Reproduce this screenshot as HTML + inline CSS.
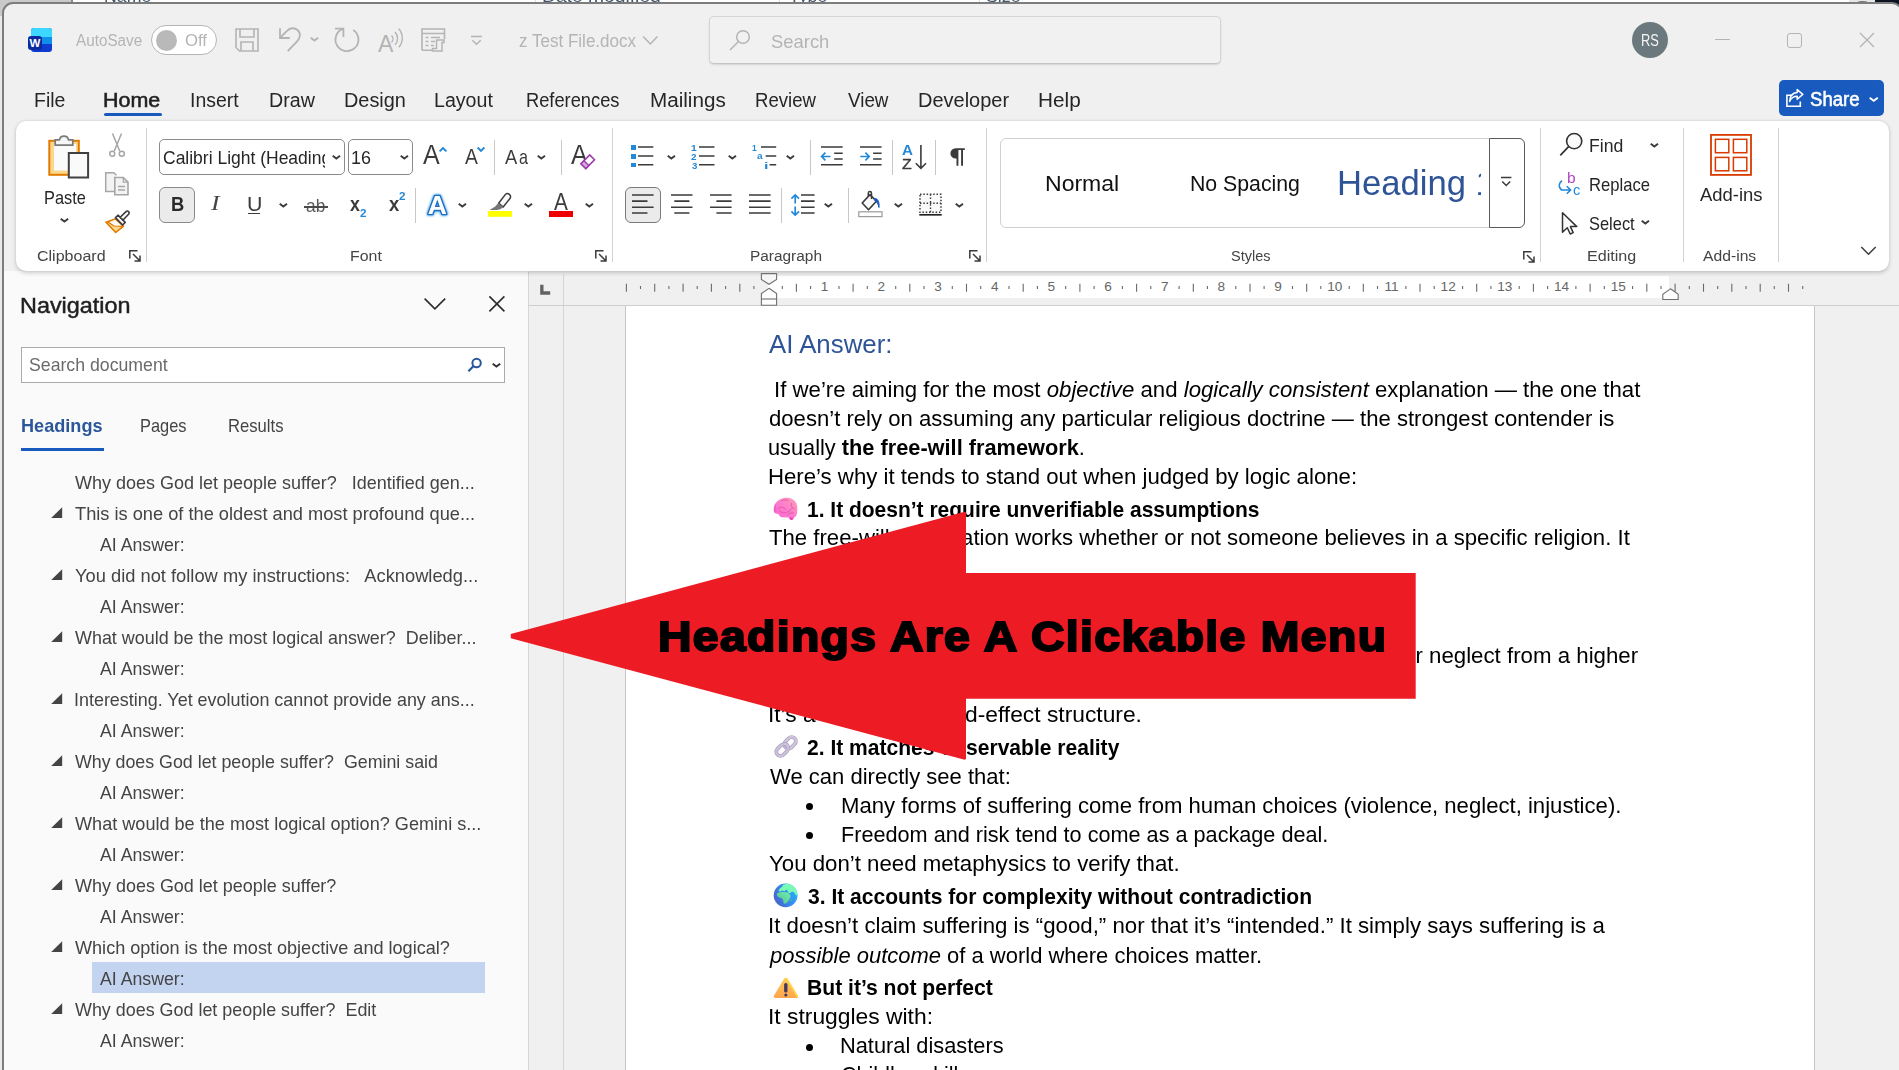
<!DOCTYPE html>
<html lang="en"><head><meta charset="utf-8"><title>z Test File.docx - Word</title>
<style>
html,body{margin:0;padding:0}
body{width:1899px;height:1070px;overflow:hidden;position:relative;background:#f0f0f0;font-family:"Liberation Sans",sans-serif;color:#222}
.a{position:absolute;display:block}
.t{position:absolute;white-space:pre;line-height:1;transform-origin:0 0}
svg{overflow:visible}
</style></head>
<body>
<div class="a" style="left:0px;top:0px;width:1899px;height:20px;background:#ffffff;"></div>
<div class="a" style="left:0px;top:0px;width:71px;height:16px;background:#c9c9c9;"></div>
<div class="a" style="left:0px;top:16px;width:6px;height:1054px;background:#e9e9e9;"></div>
<div class="a" style="left:1849px;top:0px;width:26px;height:3px;background:#e6e6e6;"></div>
<div class="a" style="left:1858px;top:1px;width:9px;height:1.5px;background:#777;border-radius:50% 50% 0 0;"></div>
<div class="a" style="left:1875px;top:0px;width:24px;height:8px;background:#0b1220;"></div>
<div class="a" style="left:0;top:0;width:1899px;height:3px;overflow:hidden">
<span class="t" style="left:103.5px;top:-12px;font-size:17px;color:#44546a;transform:scaleX(1.0417);">Name</span>
<span class="t" style="left:542.4px;top:-12px;font-size:17px;color:#44546a;transform:scaleX(1.1328);">Date modified</span>
<span class="t" style="left:788.6px;top:-12px;font-size:17px;color:#44546a;transform:scaleX(1.0358);">Type</span>
<span class="t" style="left:986.2px;top:-12px;font-size:17px;color:#44546a;transform:scaleX(1.0461);">Size</span>
</div>
<div class="a" style="left:71px;top:0px;width:1.5px;height:3px;background:#8a8a8a;"></div>
<div class="a" style="left:535px;top:0px;width:1px;height:3px;background:#ddd;"></div>
<div class="a" style="left:779px;top:0px;width:1px;height:3px;background:#ddd;"></div>
<div class="a" style="left:979px;top:0px;width:1px;height:3px;background:#ddd;"></div>
<div class="a" style="left:2px;top:2px;width:1901px;height:1100px;border:2px solid #7d7d7d;border-radius:11px;background:#f0f0f0;box-sizing:border-box"></div>
<div class="a" style="left:4px;top:271px;width:524px;height:799px;background:#fafafa;"></div>
<div class="a" style="left:528px;top:272px;width:1px;height:798px;background:#d6d6d6;"></div>
<div class="a" style="left:529px;top:271px;width:1370px;height:799px;background:#f0f0f0;"></div>
<div class="a" style="left:563px;top:274px;width:1px;height:796px;background:#d4d4d4;"></div>
<div class="a" style="left:529px;top:305px;width:1370px;height:1px;background:#cfcfcf;"></div>
<div class="a" style="left:625px;top:306px;width:1190px;height:764px;background:#ffffff;border-left:1px solid #c6c6c6;border-right:1px solid #c6c6c6;box-sizing:border-box"></div>
<div class="a" style="left:768px;top:276px;width:901px;height:22px;background:#ffffff;"></div>
<div class="a" style="left:16px;top:121px;width:1873px;height:150px;background:#fff;border-radius:10px;box-shadow:0 1.5px 4px rgba(0,0,0,.19),0 0 1.5px rgba(0,0,0,.09)"></div>
<svg class="a" style="left:27.6px;top:28px;" width="24" height="24" viewBox="0 0 24 24"><rect x="3" y="0" width="21" height="24" rx="3" fill="#0f3bd0"/>
<path d="M6 0h15a3 3 0 0 1 3 3v6H3V3a3 3 0 0 1 3-3z" fill="#3dd6ff"/>
<rect x="3" y="9" width="21" height="7" fill="#0f8eea"/>
<rect x="0" y="8" width="14" height="14" rx="3" fill="#0a2a9e"/>
<text x="7" y="19.3" font-family="Liberation Sans, sans-serif" font-weight="700" font-size="11.5" fill="#fff" text-anchor="middle">W</text></svg>
<span class="t" style="left:75.5px;top:33px;font-size:16px;color:#b4b4b4;transform:scaleX(0.9542);">AutoSave</span>
<div class="a" style="left:151px;top:25px;width:66px;height:30px;border:1px solid #b5b5b5;border-radius:15px;background:#fff;box-sizing:border-box"></div>
<div class="a" style="left:156px;top:29.5px;width:21px;height:21px;border-radius:50%;background:#b9b9b9"></div>
<span class="t" style="left:184.6px;top:33px;font-size:16px;color:#b4b4b4;transform:scaleX(1.0437);">Off</span>
<svg class="a" style="left:235px;top:28px;" width="24" height="24" viewBox="0 0 24 24"><path d="M1 1h22v22H4.5L1 19.5z M5 1v8h14V1 M6 23v-9h12v9" fill="none" stroke="#b4b4b4" stroke-width="1.6" stroke-linejoin="miter"/></svg>
<svg class="a" style="left:279px;top:27px;" width="23" height="26" viewBox="0 0 23 26"><path d="M1 1.2v9.8h9.7" fill="none" stroke="#b4b4b4" stroke-width="1.8"/><path d="M1.3 10.7 L8 3.8 C11 0.8 15.5 0.3 18.5 3 C22 6 21.5 11 18 14.5 L8.7 24.2" fill="none" stroke="#b4b4b4" stroke-width="1.8"/></svg>
<svg class="a" style="left:310.0px;top:37.1px;" width="8.9" height="4.9" viewBox="0 0 8.9 4.9"><path d="M0.7 0.7 L4.45 3.60 L8.20 0.7" fill="none" stroke="#b4b4b4" stroke-width="1.9"/></svg>
<svg class="a" style="left:334px;top:27px;" width="26" height="26" viewBox="0 0 26 26"><path d="M9.5 1.7 A11.5 11.5 0 1 0 19.2 3" fill="none" stroke="#b4b4b4" stroke-width="1.8"/><path d="M1 1.7h8.4v8.3" fill="none" stroke="#b4b4b4" stroke-width="1.8"/></svg>
<svg class="a" style="left:378px;top:27px;" width="26" height="26" viewBox="0 0 26 26"><text x="0" y="24.5" font-family="Liberation Sans, sans-serif" font-size="23" fill="#b4b4b4">A</text>
<path d="M13.5 8.5a5 5 0 0 1 0 7 M17 5a9.5 9.5 0 0 1 0 13 M20.8 1.8a14 14 0 0 1 0 18.5" fill="none" stroke="#b4b4b4" stroke-width="1.4"/></svg>
<svg class="a" style="left:421px;top:28px;" width="25" height="24" viewBox="0 0 25 24"><path d="M1 22.2V1h22.5v10 M1 5.5h22.5 M1 22.2h11" fill="none" stroke="#b4b4b4" stroke-width="1.6"/>
<path d="M4.5 9.5h3 M10 9.5h9 M4.5 13.5h3 M10 13.5h4 M4.5 17.5h3 M10 17.5h3" stroke="#b4b4b4" stroke-width="1.6"/>
<path d="M15.5 20.5v-8.5h7.5v2.5h-2v8.5h-9.5v-2.5z" fill="#f0f0f0" stroke="#b4b4b4" stroke-width="1.5"/></svg>
<svg class="a" style="left:470px;top:35px;" width="13" height="11" viewBox="0 0 13 11"><path d="M1 1.5h11" stroke="#b4b4b4" stroke-width="1.5"/><path d="M2.3 5.3 L6.5 9.3 L10.7 5.3" fill="none" stroke="#b4b4b4" stroke-width="1.5"/></svg>
<span class="t" style="left:519.3px;top:33px;font-size:17.5px;color:#b4b4b4;transform:scaleX(0.9733);">z Test File.docx</span>
<svg class="a" style="left:642px;top:35px;" width="17" height="11" viewBox="0 0 17 11"><path d="M1.2 1.5 L8.3 9 L15.4 1.5" fill="none" stroke="#b4b4b4" stroke-width="1.5"/></svg>
<div class="a" style="left:709px;top:16px;width:512px;height:48px;border:1px solid #d5d5d5;border-bottom-color:#c4c4c4;border-radius:5px;background:#f1f1f1;box-sizing:border-box;box-shadow:0 1px 2px rgba(0,0,0,.12)"></div>
<svg class="a" style="left:729px;top:29px;" width="22" height="22" viewBox="0 0 22 22"><circle cx="14" cy="8" r="6.3" fill="none" stroke="#b4b4b4" stroke-width="1.5"/><path d="M9.5 12.5 L1 21" stroke="#b4b4b4" stroke-width="1.5"/></svg>
<span class="t" style="left:770.9px;top:32px;font-size:19px;color:#b4b4b4;transform:scaleX(0.9689);">Search</span>
<div class="a" style="left:1632px;top:22px;width:36px;height:36px;border-radius:50%;background:#6b787d"></div>
<span class="t" style="left:1640.6px;top:33px;font-size:16px;color:#f4f4f4;transform:scaleX(0.8028);">RS</span>
<div class="a" style="left:1715px;top:39px;width:15px;height:1.3px;background:#b4b4b4;"></div>
<div class="a" style="left:1787px;top:33px;width:14.5px;height:14.5px;border:1.4px solid #b4b4b4;border-radius:3px;box-sizing:border-box"></div>
<svg class="a" style="left:1859px;top:32px;" width="16" height="16" viewBox="0 0 16 16"><path d="M1 1 L15 15 M15 1 L1 15" stroke="#b4b4b4" stroke-width="1.4"/></svg>
<span class="t" style="left:34.4px;top:90px;font-size:20px;color:#262626;transform:scaleX(0.9731);">File</span>
<span class="t" style="left:189.9px;top:90px;font-size:20px;color:#262626;transform:scaleX(0.9703);">Insert</span>
<span class="t" style="left:269.1px;top:90px;font-size:20px;color:#262626;transform:scaleX(0.9827);">Draw</span>
<span class="t" style="left:344.0px;top:90px;font-size:20px;color:#262626;transform:scaleX(0.9946);">Design</span>
<span class="t" style="left:434.3px;top:90px;font-size:20px;color:#262626;transform:scaleX(0.9800);">Layout</span>
<span class="t" style="left:526.3px;top:90px;font-size:20px;color:#262626;transform:scaleX(0.9138);">References</span>
<span class="t" style="left:650.0px;top:90px;font-size:20px;color:#262626;transform:scaleX(1.0324);">Mailings</span>
<span class="t" style="left:755.1px;top:90px;font-size:20px;color:#262626;transform:scaleX(0.9283);">Review</span>
<span class="t" style="left:847.5px;top:90px;font-size:20px;color:#262626;transform:scaleX(0.9406);">View</span>
<span class="t" style="left:918.0px;top:90px;font-size:20px;color:#262626;transform:scaleX(0.9990);">Developer</span>
<span class="t" style="left:1038.0px;top:90px;font-size:20px;color:#262626;transform:scaleX(1.0374);">Help</span>
<span class="t" style="left:102.9px;top:90px;font-size:20px;color:#1f1f1f;transform:scaleX(1.0724);-webkit-text-stroke:.55px #1f1f1f;">Home</span>
<div class="a" style="left:104px;top:112.5px;width:57.5px;height:3px;border-radius:1.5px;background:#185abd"></div>
<div class="a" style="left:1779px;top:80px;width:105px;height:36px;border-radius:5px;background:#185abd"></div>
<svg class="a" style="left:1785px;top:88px;" width="20" height="20" viewBox="0 0 20 20"><path d="M7.5 7.2H1.9V18.3H15.3V13.6" fill="none" stroke="#fff" stroke-width="1.6"/>
<path d="M12.2 1.6 L17.8 6.4 L12.2 11.2 V8.3 C8.6 8.3 6 10 4.6 13.4 C4.8 8.2 7.6 4.9 12.2 4.5z" fill="none" stroke="#fff" stroke-width="1.5" stroke-linejoin="round"/></svg>
<span class="t" style="left:1810.2px;top:90px;font-size:19.5px;color:#fff;transform:scaleX(0.9545);-webkit-text-stroke:.55px #fff;">Share</span>
<svg class="a" style="left:1868.7px;top:96.8px;" width="9.5" height="5.1" viewBox="0 0 9.5 5.1"><path d="M0.7 0.7 L4.75 3.80 L8.80 0.7" fill="none" stroke="#fff" stroke-width="1.9"/></svg>
<div class="a" style="left:145.8px;top:128px;width:1px;height:134px;background:#d1d1d1;"></div>
<div class="a" style="left:612.2px;top:128px;width:1px;height:134px;background:#d1d1d1;"></div>
<div class="a" style="left:986.0px;top:128px;width:1px;height:134px;background:#d1d1d1;"></div>
<div class="a" style="left:1539.9px;top:128px;width:1px;height:134px;background:#d1d1d1;"></div>
<div class="a" style="left:1683.0px;top:128px;width:1px;height:134px;background:#d1d1d1;"></div>
<div class="a" style="left:1778.0px;top:128px;width:1px;height:134px;background:#d1d1d1;"></div>
<div class="a" style="left:494.1px;top:139.5px;width:1px;height:35.3px;background:#c8c8c8;"></div>
<div class="a" style="left:561.0px;top:139.5px;width:1px;height:35.3px;background:#c8c8c8;"></div>
<div class="a" style="left:810.0px;top:139.5px;width:1px;height:35.3px;background:#c8c8c8;"></div>
<div class="a" style="left:891.9px;top:139.5px;width:1px;height:35.3px;background:#c8c8c8;"></div>
<div class="a" style="left:935.0px;top:139.5px;width:1px;height:35.3px;background:#c8c8c8;"></div>
<div class="a" style="left:415.0px;top:187.5px;width:1px;height:35.4px;background:#c8c8c8;"></div>
<div class="a" style="left:780.9px;top:187.5px;width:1px;height:35.4px;background:#c8c8c8;"></div>
<div class="a" style="left:848.0px;top:187.5px;width:1px;height:35.4px;background:#c8c8c8;"></div>
<svg class="a" style="left:47px;top:132px;" width="44" height="48" viewBox="0 0 44 48"><rect x="2.3" y="8.8" width="29.5" height="34" fill="#fbd78c" stroke="#e27a00" stroke-width="2"/>
<rect x="7" y="12" width="22" height="26.5" fill="#fafafa"/>
<path d="M8.2 13.2V7.8h4.2a4.7 4.7 0 0 1 9.2 0h4.2v5.4z" fill="#f6f6f6" stroke="#7a7a7a" stroke-width="1.7"/>
<rect x="21.8" y="21" width="19.3" height="24.5" fill="#fafafa" stroke="#404040" stroke-width="2"/></svg>
<span class="t" style="left:43.9px;top:189px;font-size:18.6px;color:#262626;transform:scaleX(0.8781);">Paste</span>
<svg class="a" style="left:60.0px;top:217.8px;" width="8.9" height="4.9" viewBox="0 0 8.9 4.9"><path d="M0.7 0.7 L4.45 3.60 L8.20 0.7" fill="none" stroke="#3b3b3b" stroke-width="1.9"/></svg>
<svg class="a" style="left:108px;top:132px;" width="18" height="26" viewBox="0 0 18 26"><path d="M4.5 1.5 L11.7 19 M13.5 1.5 L6.3 19" stroke="#a6a6a6" stroke-width="1.5" fill="none"/>
<circle cx="4.2" cy="21.8" r="2.5" fill="none" stroke="#a6a6a6" stroke-width="1.5"/><circle cx="13.8" cy="21.8" r="2.5" fill="none" stroke="#a6a6a6" stroke-width="1.5"/></svg>
<svg class="a" style="left:104px;top:171px;" width="26" height="26" viewBox="0 0 26 26"><path d="M10 20.5H1.7V1.7h8l2.8 2.6" fill="#f3f3f3" stroke="#a6a6a6" stroke-width="1.5"/>
<path d="M10.8 6.5h8.5l4.7 4.7v12.6H10.8z" fill="#f3f3f3" stroke="#a6a6a6" stroke-width="1.6"/>
<path d="M19.3 6.5v4.7h4.7" fill="none" stroke="#a6a6a6" stroke-width="1.3"/>
<path d="M14 15.5h7 M14 19h7" stroke="#a6a6a6" stroke-width="1.3"/></svg>
<svg class="a" style="left:104px;top:209px;" width="28" height="26" viewBox="0 0 28 26"><path d="M2 13.2 L11.2 10 L19.3 17.3 L11.7 23.5z" fill="#fbd78c" stroke="#e27a00" stroke-width="1.6" stroke-linejoin="round"/>
<path d="M11.2 10 L4 13 L10 17 L19.3 17.3z" fill="#fafafa" stroke="#e27a00" stroke-width="1.2" stroke-linejoin="round"/>
<path d="M11.5 8.6 L14.2 6.2 L21.2 13.4 L18.6 16z" fill="#fafafa" stroke="#3b3b3b" stroke-width="1.6" stroke-linejoin="round"/>
<path d="M16.2 8.3 L22 2.6 a1.8 1.8 0 0 1 2.6 0 a1.8 1.8 0 0 1 0 2.6 L19 11z" fill="#fafafa" stroke="#3b3b3b" stroke-width="1.6" stroke-linejoin="round"/></svg>
<span class="t" style="left:36.7px;top:248px;font-size:15.5px;color:#444;transform:scaleX(1.0331);">Clipboard</span>
<svg class="a" style="left:129.3px;top:250.3px;" width="12" height="12" viewBox="0 0 12 12"><path d="M0.8 8.5V0.8H8.5" fill="none" stroke="#3b3b3b" stroke-width="1.5"/><path d="M4 4 L10.8 10.8 M11 5.5 V11 H5.5" fill="none" stroke="#3b3b3b" stroke-width="1.5"/></svg>
<div class="a" style="left:159px;top:139px;width:186px;height:36px;background:#fff;border:1px solid #8a8a8a;border-radius:5px;box-sizing:border-box"></div>
<div class="a" style="left:160px;top:141px;width:165.4px;height:32px;overflow:hidden"><span class="t" style="left:2.8px;top:8px;font-size:18.6px;color:#262626;transform:scaleX(0.9405)">Calibri Light (Headings)</span></div>
<svg class="a" style="left:332.3px;top:155.4px;" width="8.7" height="4.8" viewBox="0 0 8.7 4.8"><path d="M0.7 0.7 L4.35 3.50 L8.00 0.7" fill="none" stroke="#3b3b3b" stroke-width="1.9"/></svg>
<div class="a" style="left:348px;top:139px;width:65px;height:36px;background:#fff;border:1px solid #8a8a8a;border-radius:5px;box-sizing:border-box"></div>
<span class="t" style="left:351.2px;top:149px;font-size:18.6px;color:#262626;transform:scaleX(0.9645);">16</span>
<svg class="a" style="left:400.0px;top:155.4px;" width="8.7" height="4.8" viewBox="0 0 8.7 4.8"><path d="M0.7 0.7 L4.35 3.50 L8.00 0.7" fill="none" stroke="#3b3b3b" stroke-width="1.9"/></svg>
<span class="t" style="left:423.3px;top:141px;font-size:27.5px;color:#3b3b3b;transform:scaleX(0.9103);">A</span>
<svg class="a" style="left:437.5px;top:145.5px;" width="10" height="7" viewBox="0 0 10 7"><path d="M1.6 5.4 L5 2 L8.4 5.4" fill="none" stroke="#2488d8" stroke-width="1.9"/></svg>
<span class="t" style="left:465.0px;top:147px;font-size:21.5px;color:#3b3b3b;transform:scaleX(0.8978);">A</span>
<svg class="a" style="left:476.3px;top:146px;" width="10" height="7" viewBox="0 0 10 7"><path d="M1.6 1.5 L5 4.9 L8.4 1.5" fill="none" stroke="#2488d8" stroke-width="1.9"/></svg>
<span class="t" style="left:504.5px;top:147px;font-size:20.3px;color:#3b3b3b;transform:scaleX(0.9063);">A</span>
<span class="t" style="left:519.1px;top:147px;font-size:20.3px;color:#3b3b3b;transform:scaleX(0.7959);">a</span>
<svg class="a" style="left:537.1px;top:155.4px;" width="8.7" height="4.8" viewBox="0 0 8.7 4.8"><path d="M0.7 0.7 L4.35 3.50 L8.00 0.7" fill="none" stroke="#3b3b3b" stroke-width="1.9"/></svg>
<span class="t" style="left:570.9px;top:141px;font-size:27.5px;color:#3b3b3b;transform:scaleX(0.9103);">A</span>
<svg class="a" style="left:579px;top:153px;" width="18" height="17" viewBox="0 0 18 17"><path d="M2 10.7 L10.7 2 L15.5 6.8 L6.8 15.5z" fill="#fff" stroke="#9b3aa9" stroke-width="1.6"/><path d="M2 10.7 L5 7.7 L9.8 12.5 L6.8 15.5z" fill="#d9a7e0" stroke="#9b3aa9" stroke-width="1.3"/></svg>
<div class="a" style="left:159px;top:187px;width:36px;height:36px;background:#ebebeb;border:1px solid #8a8a8a;border-radius:6px;box-sizing:border-box"></div>
<span class="t" style="left:170.6px;top:194px;font-size:20px;font-weight:700;color:#2a2a2a;transform:scaleX(0.9182);">B</span>
<span class="t" style="left:210.8px;top:193px;font-size:21.5px;font-family:'Liberation Serif',serif;font-style:italic;color:#444;transform:scaleX(1.2)">I</span>
<span class="t" style="left:246.5px;top:195px;font-size:19.5px;color:#3b3b3b;transform:scaleX(1.0927);">U</span>
<div class="a" style="left:247.7px;top:212.8px;width:12.8px;height:1.4px;background:#3b3b3b;"></div>
<svg class="a" style="left:278.9px;top:203.2px;" width="8.7" height="4.8" viewBox="0 0 8.7 4.8"><path d="M0.7 0.7 L4.35 3.50 L8.00 0.7" fill="none" stroke="#3b3b3b" stroke-width="1.9"/></svg>
<span class="t" style="left:305.7px;top:196px;font-size:19px;color:#5a5a5a;transform:scaleX(0.9114);">ab</span>
<div class="a" style="left:304.3px;top:206.4px;width:23.4px;height:1.3px;background:#4a4a4a;"></div>
<span class="t" style="left:350.2px;top:194px;font-size:20px;font-weight:700;color:#3b3b3b;transform:scaleX(0.8856);">x</span>
<span class="t" style="left:360.3px;top:208px;font-size:11px;font-weight:700;color:#2488d8;transform:scaleX(1.0574);">2</span>
<span class="t" style="left:388.6px;top:194px;font-size:20px;font-weight:700;color:#3b3b3b;transform:scaleX(0.9225);">x</span>
<span class="t" style="left:399.4px;top:191px;font-size:11px;font-weight:700;color:#2488d8;transform:scaleX(1.0574);">2</span>
<svg class="a" style="left:424px;top:191px;filter:drop-shadow(0 0 1.2px #5fb0f2) drop-shadow(0 0 0.8px #7cc0f5);" width="27" height="27" viewBox="0 0 27 27"><text x="13.4" y="22.9" text-anchor="middle" font-family="Liberation Sans, sans-serif" font-weight="700" font-size="26.5" fill="#fff" stroke="#1b6ec2" stroke-width="2.7" stroke-linejoin="round" paint-order="stroke">A</text></svg>
<svg class="a" style="left:458.0px;top:203.2px;" width="8.7" height="4.8" viewBox="0 0 8.7 4.8"><path d="M0.7 0.7 L4.35 3.50 L8.00 0.7" fill="none" stroke="#3b3b3b" stroke-width="1.9"/></svg>
<svg class="a" style="left:487px;top:191px;" width="26" height="27" viewBox="0 0 26 27"><rect x="1" y="20" width="24" height="5.8" fill="#ffff00"/>
<path d="M11.6 12.2 L18.3 3.6 a2.6 2.6 0 0 1 3.7 -0.4 l0.6 0.5 a2.6 2.6 0 0 1 0.4 3.7 L16.2 16z" fill="#fafafa" stroke="#3b3b3b" stroke-width="1.5" stroke-linejoin="round"/>
<path d="M11.3 12 L16.5 16.2 L13.2 18.3 L10.2 19 H2.5 L8.2 15.6z" fill="#767676"/></svg>
<svg class="a" style="left:523.8px;top:203.2px;" width="8.7" height="4.8" viewBox="0 0 8.7 4.8"><path d="M0.7 0.7 L4.35 3.50 L8.00 0.7" fill="none" stroke="#3b3b3b" stroke-width="1.9"/></svg>
<span class="t" style="left:554.3px;top:191px;font-size:23px;color:#3b3b3b;transform:scaleX(0.9048);">A</span>
<div class="a" style="left:549px;top:211px;width:24px;height:5.8px;background:#ee0000;"></div>
<svg class="a" style="left:584.6px;top:203.2px;" width="8.7" height="4.8" viewBox="0 0 8.7 4.8"><path d="M0.7 0.7 L4.35 3.50 L8.00 0.7" fill="none" stroke="#3b3b3b" stroke-width="1.9"/></svg>
<span class="t" style="left:350.2px;top:248px;font-size:15.5px;color:#444;transform:scaleX(1.0260);">Font</span>
<svg class="a" style="left:595.2px;top:250.3px;" width="12" height="12" viewBox="0 0 12 12"><path d="M0.8 8.5V0.8H8.5" fill="none" stroke="#3b3b3b" stroke-width="1.5"/><path d="M4 4 L10.8 10.8 M11 5.5 V11 H5.5" fill="none" stroke="#3b3b3b" stroke-width="1.5"/></svg>
<div class="a" style="left:631px;top:144.9px;width:4.8px;height:4.8px;background:#2488d8;"></div>
<div class="a" style="left:631px;top:153.9px;width:4.8px;height:4.8px;background:#2488d8;"></div>
<div class="a" style="left:631px;top:162.7px;width:4.8px;height:4.8px;background:#2488d8;"></div>
<svg class="a" style="left:637.4px;top:145.3px;" width="18.3" height="22.8" viewBox="0 0 18.3 22.8"><path d="M1.0 2.0H16.3 M1.0 11.0H16.3 M1.0 19.8H16.3" stroke="#3b3b3b" stroke-width="1.6" fill="none"/></svg>
<svg class="a" style="left:666.9px;top:155.4px;" width="8.7" height="4.8" viewBox="0 0 8.7 4.8"><path d="M0.7 0.7 L4.35 3.50 L8.00 0.7" fill="none" stroke="#3b3b3b" stroke-width="1.9"/></svg>
<span class="t" style="left:691.1px;top:144px;font-size:9.2px;font-weight:700;color:#2488d8;transform:scaleX(1.1212);">1</span>
<span class="t" style="left:691.4px;top:153px;font-size:9.2px;font-weight:700;color:#2488d8;transform:scaleX(1.0836);">2</span>
<span class="t" style="left:691.5px;top:162px;font-size:9.2px;font-weight:700;color:#2488d8;transform:scaleX(1.0496);">3</span>
<svg class="a" style="left:698.4px;top:145.3px;" width="18.5" height="22.8" viewBox="0 0 18.5 22.8"><path d="M1.0 2.0H16.5 M1.0 11.0H16.5 M1.0 19.8H16.5" stroke="#3b3b3b" stroke-width="1.6" fill="none"/></svg>
<svg class="a" style="left:727.9px;top:155.4px;" width="8.7" height="4.8" viewBox="0 0 8.7 4.8"><path d="M0.7 0.7 L4.35 3.50 L8.00 0.7" fill="none" stroke="#3b3b3b" stroke-width="1.9"/></svg>
<span class="t" style="left:752.3px;top:144px;font-size:9.2px;font-weight:700;color:#2488d8;transform:scaleX(0.9110);">1</span>
<span class="t" style="left:756.6px;top:151px;font-size:9.6px;font-weight:700;color:#2488d8;transform:scaleX(1.0549);">a</span>
<span class="t" style="left:763.7px;top:161px;font-size:9.6px;font-weight:700;color:#2488d8;transform:scaleX(1.6705);">i</span>
<svg class="a" style="left:759.7px;top:145.3px;" width="18.2" height="22.8" viewBox="0 0 18.2 22.8"><path d="M1.0 2.0H16.2 M5.7 11.0H16.2 M9.6 19.8H16.2" stroke="#3b3b3b" stroke-width="1.6" fill="none"/></svg>
<svg class="a" style="left:785.9px;top:155.4px;" width="8.7" height="4.8" viewBox="0 0 8.7 4.8"><path d="M0.7 0.7 L4.35 3.50 L8.00 0.7" fill="none" stroke="#3b3b3b" stroke-width="1.9"/></svg>
<svg class="a" style="left:820.1px;top:145.3px;" width="24.7" height="22.8" viewBox="0 0 24.7 22.8"><path d="M1.0 2.0H22.7 M14.2 8.2H22.7 M14.2 14.0H22.7 M1.0 19.8H22.7" stroke="#3b3b3b" stroke-width="1.6" fill="none"/></svg>
<svg class="a" style="left:820px;top:151px;" width="12" height="11" viewBox="0 0 12 11"><path d="M1.6 5.5 H10.5 M5.4 1.7 L1.6 5.5 L5.4 9.3" fill="none" stroke="#2488d8" stroke-width="1.7"/></svg>
<svg class="a" style="left:859.3px;top:145.3px;" width="24.6" height="22.8" viewBox="0 0 24.6 22.8"><path d="M1.0 2.0H22.6 M14.1 8.2H22.6 M14.1 14.0H22.6 M1.0 19.8H22.6" stroke="#3b3b3b" stroke-width="1.6" fill="none"/></svg>
<svg class="a" style="left:859px;top:151px;" width="12" height="11" viewBox="0 0 12 11"><path d="M1.3 5.5 H10.2 M6.4 1.7 L10.2 5.5 L6.4 9.3" fill="none" stroke="#2488d8" stroke-width="1.7"/></svg>
<span class="t" style="left:901.7px;top:143px;font-size:14.4px;font-weight:700;color:#2488d8;transform:scaleX(1.0558);-webkit-text-stroke:0;">A</span>
<span class="t" style="left:901.8px;top:157px;font-size:14.4px;color:#3b3b3b;transform:scaleX(1.1028);-webkit-text-stroke:.4px #3b3b3b;">Z</span>
<svg class="a" style="left:914px;top:144px;" width="14" height="26" viewBox="0 0 14 26"><path d="M6.9 1 V24.2 M1.8 19.2 L6.9 24.4 L12 19.2" fill="none" stroke="#3b3b3b" stroke-width="1.6"/></svg>
<svg class="a" style="left:948px;top:147px;" width="18" height="20" viewBox="0 0 18 20"><path d="M7.6 1.2 H16.8 V3 H15 V18.8 H13.1 V3 H10.4 V18.8 H8.5 V11.6 H7.6 a5.2 5.2 0 0 1 0 -10.4z" fill="#3b3b3b"/></svg>
<div class="a" style="left:625px;top:187px;width:36px;height:36px;background:#ebebeb;border:1px solid #7a7a7a;border-radius:6px;box-sizing:border-box"></div>
<svg class="a" style="left:631.1px;top:193.2px;" width="24.6" height="23.0" viewBox="0 0 24.6 23.0"><path d="M1.0 2.0H22.6 M1.0 8.1H16.5 M1.0 14.2H22.6 M1.0 20.0H16.5" stroke="#3b3b3b" stroke-width="1.6" fill="none"/></svg>
<svg class="a" style="left:670.2px;top:193.2px;" width="24.5" height="23.0" viewBox="0 0 24.5 23.0"><path d="M1.0 2.0H22.5 M4.3 8.1H19.4 M1.0 14.2H22.5 M4.3 20.0H19.4" stroke="#3b3b3b" stroke-width="1.6" fill="none"/></svg>
<svg class="a" style="left:709.1px;top:193.2px;" width="24.6" height="23.0" viewBox="0 0 24.6 23.0"><path d="M1.0 2.0H22.6 M7.4 8.1H22.6 M1.0 14.2H22.6 M7.4 20.0H22.6" stroke="#3b3b3b" stroke-width="1.6" fill="none"/></svg>
<svg class="a" style="left:748.1px;top:193.2px;" width="24.6" height="23.0" viewBox="0 0 24.6 23.0"><path d="M1.0 2.0H22.6 M1.0 8.1H22.6 M1.0 14.2H22.6 M1.0 20.0H22.6" stroke="#3b3b3b" stroke-width="1.6" fill="none"/></svg>
<svg class="a" style="left:789.5px;top:193px;" width="11" height="24" viewBox="0 0 11 24"><path d="M5.2 1.9 V10.5 M1.4 5.7 L5.2 1.9 L9 5.7 M5.2 13.5 V22.1 M1.4 18.3 L5.2 22.1 L9 18.3" fill="none" stroke="#2488d8" stroke-width="1.7"/></svg>
<svg class="a" style="left:800.3px;top:193.2px;" width="16.6" height="23.0" viewBox="0 0 16.6 23.0"><path d="M1.0 2.0H14.6 M1.0 8.1H14.6 M1.0 14.2H14.6 M1.0 20.0H14.6" stroke="#3b3b3b" stroke-width="1.6" fill="none"/></svg>
<svg class="a" style="left:823.7px;top:203.2px;" width="8.7" height="4.8" viewBox="0 0 8.7 4.8"><path d="M0.7 0.7 L4.35 3.50 L8.00 0.7" fill="none" stroke="#3b3b3b" stroke-width="1.9"/></svg>
<svg class="a" style="left:857px;top:190px;" width="27" height="28" viewBox="0 0 27 28"><rect x="1.8" y="21.8" width="23.2" height="4.8" fill="#fff" stroke="#9a9a9a" stroke-width="1.2"/>
<path d="M5.2 13 L13 4.6 L19.4 11.2 L11.5 19.7z" fill="#fafafa" stroke="#3b3b3b" stroke-width="1.6" stroke-linejoin="round"/>
<path d="M11.3 6.5 V3.2 a1.6 1.6 0 0 1 3.2 0 V9" fill="none" stroke="#3b3b3b" stroke-width="1.5"/>
<path d="M17.3 8.6 C20.5 8 22.6 11.5 22 17.5 C21.2 14 20 11.6 17.8 10.6z" fill="#185abd" stroke="#185abd" stroke-width="1"/></svg>
<svg class="a" style="left:893.9px;top:203.2px;" width="8.7" height="4.8" viewBox="0 0 8.7 4.8"><path d="M0.7 0.7 L4.35 3.50 L8.00 0.7" fill="none" stroke="#3b3b3b" stroke-width="1.9"/></svg>
<svg class="a" style="left:918px;top:192px;" width="25" height="25" viewBox="0 0 25 25"><rect x="2" y="2.3" width="21" height="18" fill="#fafafa" stroke="#3b3b3b" stroke-width="1.5" stroke-dasharray="1.5 1.8"/>
<path d="M12.5 2.3 V20.3 M2 11.3 H23" stroke="#3b3b3b" stroke-width="1.4" stroke-dasharray="1.5 1.8"/>
<path d="M1.3 22.8 H23.7" stroke="#222" stroke-width="1.7"/></svg>
<svg class="a" style="left:954.7px;top:203.2px;" width="8.7" height="4.8" viewBox="0 0 8.7 4.8"><path d="M0.7 0.7 L4.35 3.50 L8.00 0.7" fill="none" stroke="#3b3b3b" stroke-width="1.9"/></svg>
<span class="t" style="left:750.4px;top:248px;font-size:15.5px;color:#444;transform:scaleX(0.9942);">Paragraph</span>
<svg class="a" style="left:969.3px;top:250.3px;" width="12" height="12" viewBox="0 0 12 12"><path d="M0.8 8.5V0.8H8.5" fill="none" stroke="#3b3b3b" stroke-width="1.5"/><path d="M4 4 L10.8 10.8 M11 5.5 V11 H5.5" fill="none" stroke="#3b3b3b" stroke-width="1.5"/></svg>
<div class="a" style="left:1000px;top:138px;width:525px;height:90px;border:1px solid #d0d0d0;border-radius:6px;background:#fff;box-sizing:border-box"></div>
<div class="a" style="left:1489px;top:138px;width:36px;height:90px;border:1px solid #5a5a5a;border-radius:0 6px 6px 0;background:#fff;box-sizing:border-box"></div>
<span class="t" style="left:1045.0px;top:173px;font-size:22.5px;color:#111;transform:scaleX(1.0237);">Normal</span>
<span class="t" style="left:1190.3px;top:173px;font-size:22.5px;color:#111;transform:scaleX(0.9449);">No Spacing</span>
<div class="a" style="left:1330px;top:160px;width:150.6px;height:50px;overflow:hidden"><span class="t" style="left:6.5px;top:6px;font-size:34.5px;color:#2f5496;transform:scaleX(1.0030)">Heading 1</span></div>
<svg class="a" style="left:1500px;top:175px;" width="13" height="13" viewBox="0 0 13 13"><path d="M1 2.5 H11.4" stroke="#3b3b3b" stroke-width="1.5"/><path d="M2.2 6.5 L6.2 10.5 L10.2 6.5" fill="none" stroke="#3b3b3b" stroke-width="1.5"/></svg>
<span class="t" style="left:1231.1px;top:248px;font-size:15.5px;color:#444;transform:scaleX(0.9378);">Styles</span>
<svg class="a" style="left:1523.2px;top:250.6px;" width="12" height="12" viewBox="0 0 12 12"><path d="M0.8 8.5V0.8H8.5" fill="none" stroke="#3b3b3b" stroke-width="1.5"/><path d="M4 4 L10.8 10.8 M11 5.5 V11 H5.5" fill="none" stroke="#3b3b3b" stroke-width="1.5"/></svg>
<svg class="a" style="left:1559px;top:132px;" width="26" height="26" viewBox="0 0 26 26"><circle cx="15.2" cy="9.1" r="7.6" fill="#fafafa" stroke="#333" stroke-width="1.6"/><path d="M9.6 14.6 L1.3 23.4" stroke="#333" stroke-width="1.7"/></svg>
<span class="t" style="left:1588.7px;top:137px;font-size:18.6px;color:#262626;transform:scaleX(0.9474);">Find</span>
<svg class="a" style="left:1650.1px;top:143.1px;" width="8.7" height="4.8" viewBox="0 0 8.7 4.8"><path d="M0.7 0.7 L4.35 3.50 L8.00 0.7" fill="none" stroke="#3b3b3b" stroke-width="1.9"/></svg>
<span class="t" style="left:1567.1px;top:170px;font-size:15px;color:#b146c2;transform:scaleX(1.0377);">b</span>
<span class="t" style="left:1573.1px;top:182px;font-size:15px;color:#2488d8;transform:scaleX(0.9741);">c</span>
<svg class="a" style="left:1557px;top:179px;" width="16" height="17" viewBox="0 0 16 17"><path d="M5 1.8 C1.5 4 1.2 8.5 4.5 11 H13.5 M9.8 7.2 L13.6 11 L9.8 14.8" fill="none" stroke="#2488d8" stroke-width="1.6"/></svg>
<span class="t" style="left:1588.7px;top:176px;font-size:18.6px;color:#262626;transform:scaleX(0.8939);">Replace</span>
<svg class="a" style="left:1560px;top:211px;" width="20" height="25" viewBox="0 0 20 25"><path d="M2.5 1.8 V21.2 L7.3 16.8 L10.2 23 L13.2 21.6 L10.4 15.6 H16.8z" fill="#fafafa" stroke="#333" stroke-width="1.5" stroke-linejoin="round"/></svg>
<span class="t" style="left:1589.2px;top:215px;font-size:18.6px;color:#262626;transform:scaleX(0.8834);">Select</span>
<svg class="a" style="left:1641.3px;top:220.2px;" width="8.7" height="4.8" viewBox="0 0 8.7 4.8"><path d="M0.7 0.7 L4.35 3.50 L8.00 0.7" fill="none" stroke="#3b3b3b" stroke-width="1.9"/></svg>
<span class="t" style="left:1586.5px;top:248px;font-size:15.5px;color:#444;transform:scaleX(1.0393);">Editing</span>
<svg class="a" style="left:1709px;top:133px;" width="44" height="44" viewBox="0 0 44 44"><rect x="2" y="1.9" width="40" height="40" fill="#fff" stroke="#d83b01" stroke-width="1.8"/>
<rect x="6.4" y="6.3" width="13.4" height="13.4" fill="none" stroke="#d83b01" stroke-width="1.5"/><rect x="24.4" y="6.3" width="13.4" height="13.4" fill="none" stroke="#d83b01" stroke-width="1.5"/>
<rect x="6.4" y="24.4" width="13.4" height="13.4" fill="none" stroke="#d83b01" stroke-width="1.5"/><rect x="24.4" y="24.4" width="13.4" height="13.4" fill="none" stroke="#d83b01" stroke-width="1.5"/></svg>
<span class="t" style="left:1700.4px;top:186px;font-size:18.6px;color:#262626;transform:scaleX(0.9926);">Add-ins</span>
<span class="t" style="left:1703.4px;top:248px;font-size:15.5px;color:#444;transform:scaleX(1.0122);">Add-ins</span>
<svg class="a" style="left:1860px;top:246px;" width="17" height="10" viewBox="0 0 17 10"><path d="M1.3 1 L8.5 8.3 L15.7 1" fill="none" stroke="#3b3b3b" stroke-width="1.5"/></svg>
<span class="t" style="left:20.4px;top:295px;font-size:21.8px;color:#1f1f1f;transform:scaleX(1.0731);-webkit-text-stroke:.45px #1f1f1f;">Navigation</span>
<svg class="a" style="left:423px;top:297px;" width="24" height="14" viewBox="0 0 24 14"><path d="M1.6 1.6 L11.9 11.9 L22.2 1.6" fill="none" stroke="#2b2b2b" stroke-width="1.6"/></svg>
<svg class="a" style="left:488px;top:295px;" width="18" height="18" viewBox="0 0 18 18"><path d="M1.4 1.4 L16.4 16.4 M16.4 1.4 L1.4 16.4" stroke="#2b2b2b" stroke-width="1.6"/></svg>
<div class="a" style="left:21px;top:347px;width:484px;height:36px;border:1px solid #ababab;background:#fff;box-sizing:border-box"></div>
<span class="t" style="left:29.3px;top:356px;font-size:18.6px;color:#6a6a6a;transform:scaleX(0.9516);">Search document</span>
<svg class="a" style="left:467px;top:357px;" width="16" height="16" viewBox="0 0 16 16"><circle cx="9.6" cy="6" r="4.2" fill="none" stroke="#2b579a" stroke-width="2"/><path d="M6.6 9 L1.4 14.2" stroke="#2b579a" stroke-width="2.2"/></svg>
<svg class="a" style="left:491.9px;top:362.8px;" width="8.9" height="4.9" viewBox="0 0 8.9 4.9"><path d="M0.7 0.7 L4.45 3.60 L8.20 0.7" fill="none" stroke="#333" stroke-width="1.9"/></svg>
<span class="t" style="left:21.1px;top:417px;font-size:18.6px;font-weight:700;color:#2b579a;transform:scaleX(0.9741);">Headings</span>
<div class="a" style="left:21px;top:448px;width:83px;height:3px;background:#185abd;"></div>
<span class="t" style="left:140.4px;top:417px;font-size:18.6px;color:#444;transform:scaleX(0.8824);">Pages</span>
<span class="t" style="left:228.3px;top:417px;font-size:18.6px;color:#444;transform:scaleX(0.8943);">Results</span>
<div class="a" style="left:92px;top:962px;width:393px;height:31px;background:#c3d4f1;"></div>
<span class="t" style="left:75.2px;top:474px;font-size:18.6px;color:#444;transform:scaleX(0.9677);">Why does God let people suffer?   Identified gen...</span>
<span class="t" style="left:74.9px;top:505px;font-size:18.6px;color:#444;transform:scaleX(0.9800);">This is one of the oldest and most profound que...</span>
<svg class="a" style="left:51px;top:506.7px;" width="12" height="12" viewBox="0 0 12 12"><path d="M0.2 11 H11.2 V0.2z" fill="#444"/></svg>
<span class="t" style="left:99.6px;top:536px;font-size:18.6px;color:#444;transform:scaleX(0.9521);">AI Answer:</span>
<span class="t" style="left:74.9px;top:567px;font-size:18.6px;color:#444;transform:scaleX(0.9844);">You did not follow my instructions:   Acknowledg...</span>
<svg class="a" style="left:51px;top:568.7px;" width="12" height="12" viewBox="0 0 12 12"><path d="M0.2 11 H11.2 V0.2z" fill="#444"/></svg>
<span class="t" style="left:99.6px;top:598px;font-size:18.6px;color:#444;transform:scaleX(0.9521);">AI Answer:</span>
<span class="t" style="left:75.2px;top:629px;font-size:18.6px;color:#444;transform:scaleX(0.9639);">What would be the most logical answer?  Deliber...</span>
<svg class="a" style="left:51px;top:630.7px;" width="12" height="12" viewBox="0 0 12 12"><path d="M0.2 11 H11.2 V0.2z" fill="#444"/></svg>
<span class="t" style="left:99.6px;top:660px;font-size:18.6px;color:#444;transform:scaleX(0.9521);">AI Answer:</span>
<span class="t" style="left:73.6px;top:691px;font-size:18.6px;color:#444;transform:scaleX(0.9642);">Interesting. Yet evolution cannot provide any ans...</span>
<svg class="a" style="left:51px;top:692.7px;" width="12" height="12" viewBox="0 0 12 12"><path d="M0.2 11 H11.2 V0.2z" fill="#444"/></svg>
<span class="t" style="left:99.6px;top:722px;font-size:18.6px;color:#444;transform:scaleX(0.9521);">AI Answer:</span>
<span class="t" style="left:75.2px;top:753px;font-size:18.6px;color:#444;transform:scaleX(0.9576);">Why does God let people suffer?  Gemini said</span>
<svg class="a" style="left:51px;top:754.7px;" width="12" height="12" viewBox="0 0 12 12"><path d="M0.2 11 H11.2 V0.2z" fill="#444"/></svg>
<span class="t" style="left:99.6px;top:784px;font-size:18.6px;color:#444;transform:scaleX(0.9521);">AI Answer:</span>
<span class="t" style="left:75.2px;top:815px;font-size:18.6px;color:#444;transform:scaleX(0.9731);">What would be the most logical option? Gemini s...</span>
<svg class="a" style="left:51px;top:816.7px;" width="12" height="12" viewBox="0 0 12 12"><path d="M0.2 11 H11.2 V0.2z" fill="#444"/></svg>
<span class="t" style="left:99.6px;top:846px;font-size:18.6px;color:#444;transform:scaleX(0.9521);">AI Answer:</span>
<span class="t" style="left:75.2px;top:877px;font-size:18.6px;color:#444;transform:scaleX(0.9663);">Why does God let people suffer?</span>
<svg class="a" style="left:51px;top:878.7px;" width="12" height="12" viewBox="0 0 12 12"><path d="M0.2 11 H11.2 V0.2z" fill="#444"/></svg>
<span class="t" style="left:99.6px;top:908px;font-size:18.6px;color:#444;transform:scaleX(0.9521);">AI Answer:</span>
<span class="t" style="left:75.2px;top:939px;font-size:18.6px;color:#444;transform:scaleX(0.9723);">Which option is the most objective and logical?</span>
<svg class="a" style="left:51px;top:940.7px;" width="12" height="12" viewBox="0 0 12 12"><path d="M0.2 11 H11.2 V0.2z" fill="#444"/></svg>
<span class="t" style="left:99.6px;top:970px;font-size:18.6px;color:#444;transform:scaleX(0.9521);">AI Answer:</span>
<span class="t" style="left:75.2px;top:1001px;font-size:18.6px;color:#444;transform:scaleX(0.9631);">Why does God let people suffer?  Edit</span>
<svg class="a" style="left:51px;top:1002.7px;" width="12" height="12" viewBox="0 0 12 12"><path d="M0.2 11 H11.2 V0.2z" fill="#444"/></svg>
<span class="t" style="left:99.6px;top:1032px;font-size:18.6px;color:#444;transform:scaleX(0.9521);">AI Answer:</span>
<svg class="a" style="left:560px;top:275px;" width="1260" height="24" viewBox="0 0 1260 24"><path d="M66.4 8.7V16.7 M80.5 11V14 M94.7 8.7V16.7 M108.9 11V14 M123.1 8.7V16.7 M137.2 11V14 M151.4 8.7V16.7 M165.6 11V14 M179.8 8.7V16.7 M193.9 11V14 M222.3 11V14 M236.4 8.7V16.7 M250.6 11V14 M279.0 11V14 M293.1 8.7V16.7 M307.3 11V14 M335.7 11V14 M349.8 8.7V16.7 M364.0 11V14 M392.3 11V14 M406.5 8.7V16.7 M420.7 11V14 M449.0 11V14 M463.2 8.7V16.7 M477.4 11V14 M505.7 11V14 M519.9 8.7V16.7 M534.1 11V14 M562.4 11V14 M576.6 8.7V16.7 M590.8 11V14 M619.1 11V14 M633.3 8.7V16.7 M647.4 11V14 M675.8 11V14 M690.0 8.7V16.7 M704.1 11V14 M732.5 11V14 M746.7 8.7V16.7 M760.8 11V14 M789.2 11V14 M803.3 8.7V16.7 M817.5 11V14 M845.9 11V14 M860.0 8.7V16.7 M874.2 11V14 M902.6 11V14 M916.7 8.7V16.7 M930.9 11V14 M959.2 11V14 M973.4 8.7V16.7 M987.6 11V14 M1015.9 11V14 M1030.1 8.7V16.7 M1044.3 11V14 M1072.6 11V14 M1086.8 8.7V16.7 M1101.0 11V14 M1115.1 8.7V16.7 M1129.3 11V14 M1143.5 8.7V16.7 M1157.7 11V14 M1171.8 8.7V16.7 M1186.0 11V14 M1200.2 8.7V16.7 M1214.3 11V14 M1228.5 8.7V16.7 M1242.7 11V14" stroke="#6a6a6a" stroke-width="1.1" fill="none"/></svg>
<span class="t" style="left:820.8px;top:280px;font-size:13.6px;color:#666;">1</span>
<span class="t" style="left:877.5px;top:280px;font-size:13.6px;color:#666;">2</span>
<span class="t" style="left:934.2px;top:280px;font-size:13.6px;color:#666;">3</span>
<span class="t" style="left:990.9px;top:280px;font-size:13.6px;color:#666;">4</span>
<span class="t" style="left:1047.6px;top:280px;font-size:13.6px;color:#666;">5</span>
<span class="t" style="left:1104.3px;top:280px;font-size:13.6px;color:#666;">6</span>
<span class="t" style="left:1160.9px;top:280px;font-size:13.6px;color:#666;">7</span>
<span class="t" style="left:1217.6px;top:280px;font-size:13.6px;color:#666;">8</span>
<span class="t" style="left:1274.3px;top:280px;font-size:13.6px;color:#666;">9</span>
<span class="t" style="left:1327.2px;top:280px;font-size:13.6px;color:#666;">10</span>
<span class="t" style="left:1384.4px;top:280px;font-size:13.6px;color:#666;">11</span>
<span class="t" style="left:1440.6px;top:280px;font-size:13.6px;color:#666;">12</span>
<span class="t" style="left:1497.3px;top:280px;font-size:13.6px;color:#666;">13</span>
<span class="t" style="left:1554.0px;top:280px;font-size:13.6px;color:#666;">14</span>
<span class="t" style="left:1610.7px;top:280px;font-size:13.6px;color:#666;">15</span>
<svg class="a" style="left:539px;top:284px;" width="12" height="12" viewBox="0 0 12 12"><path d="M1.2 0.8 H4.5 V7.3 H11.2 V10.8 H1.2z" fill="#636363"/></svg>
<svg class="a" style="left:760px;top:272px;" width="18" height="35" viewBox="0 0 18 35"><path d="M1.4 1.6 H16.6 V7.5 L9 12.3 L1.4 7.5z" fill="#f6f6f6" stroke="#707070" stroke-width="1.1"/>
<path d="M9 16.3 L16.6 21.6 V33.3 H1.4 V21.6z" fill="#fdfdfd" stroke="#707070" stroke-width="1.1"/><path d="M1.4 27 H16.6" stroke="#707070" stroke-width="1.1"/></svg>
<svg class="a" style="left:1661px;top:287px;" width="19" height="14" viewBox="0 0 19 14"><path d="M9.5 1.8 L17.2 7.2 V12.5 H1.8 V7.2z" fill="#fdfdfd" stroke="#707070" stroke-width="1.1"/></svg>
<span class="t" style="left:769.2px;top:331px;font-size:26px;color:#2f5496;transform:scaleX(0.9930);">AI Answer:</span>
<span class="t" style="left:773.8px;top:380px;font-size:21.5px;color:#000;transform:scaleX(1.0326);">If we’re aiming for the most <i>objective</i> and <i>logically consistent</i> explanation — the one that</span>
<span class="t" style="left:768.9px;top:409px;font-size:21.5px;color:#000;transform:scaleX(1.0282);">doesn’t rely on assuming any particular religious doctrine — the strongest contender is</span>
<span class="t" style="left:768.4px;top:438px;font-size:21.5px;color:#000;transform:scaleX(1.0120);">usually <b>the free-will framework</b>.</span>
<span class="t" style="left:768.0px;top:467px;font-size:21.5px;color:#000;transform:scaleX(1.0318);">Here’s why it tends to stand out when judged by logic alone:</span>
<span class="t" style="left:807.4px;top:500px;font-size:21.5px;color:#000;transform:scaleX(0.9761);"><b>1. It doesn’t require unverifiable assumptions</b></span>
<span class="t" style="left:769.3px;top:528px;font-size:21.5px;color:#000;transform:scaleX(1.0305);">The free-will explanation works whether or not someone believes in a specific religion. It</span>
<span class="t" style="left:853.4px;top:646px;font-size:21.5px;color:#000;transform:scaleX(1.0224);">Suffering isn’t presented as punishment, testing, cruelty, or</span>
<span class="t" style="left:1428.7px;top:646px;font-size:21.5px;color:#000;transform:scaleX(1.0355);">neglect from a higher</span>
<span class="t" style="left:767.7px;top:705px;font-size:21.5px;color:#000;transform:scaleX(1.0556);">It’s a cause-an</span>
<span class="t" style="left:964.6px;top:705px;font-size:21.5px;color:#000;transform:scaleX(1.0601);">d-effect structure.</span>
<span class="t" style="left:807.3px;top:738px;font-size:21.5px;color:#000;transform:scaleX(0.9789);"><b>2. It matches observable reality</b></span>
<span class="t" style="left:769.7px;top:767px;font-size:21.5px;color:#000;transform:scaleX(1.0246);">We can directly see that:</span>
<span class="t" style="left:840.6px;top:796px;font-size:21.5px;color:#000;transform:scaleX(1.0290);">Many forms of suffering come from human choices (violence, neglect, injustice).</span>
<span class="t" style="left:840.6px;top:825px;font-size:21.5px;color:#000;transform:scaleX(1.0069);">Freedom and risk tend to come as a package deal.</span>
<span class="t" style="left:769.3px;top:854px;font-size:21.5px;color:#000;transform:scaleX(1.0340);">You don’t need metaphysics to verify that.</span>
<span class="t" style="left:807.8px;top:887px;font-size:21.5px;color:#000;transform:scaleX(0.9789);"><b>3. It accounts for complexity without contradiction</b></span>
<span class="t" style="left:767.7px;top:916px;font-size:21.5px;color:#000;transform:scaleX(1.0343);">It doesn’t claim suffering is “good,” nor that it’s “intended.” It simply says suffering is a</span>
<span class="t" style="left:770.3px;top:946px;font-size:21.5px;color:#000;transform:scaleX(1.0219);"><i>possible outcome</i> of a world where choices matter.</span>
<span class="t" style="left:806.9px;top:978px;font-size:21.5px;color:#000;transform:scaleX(0.9817);"><b>But it’s not perfect</b></span>
<span class="t" style="left:767.7px;top:1007px;font-size:21.5px;color:#000;transform:scaleX(1.0621);">It struggles with:</span>
<span class="t" style="left:840.4px;top:1036px;font-size:21.5px;color:#000;transform:scaleX(1.0140);">Natural disasters</span>
<span class="t" style="left:841.1px;top:1065px;font-size:21.5px;color:#000;transform:scaleX(1.0008);">Childhood illness</span>
<div class="a" style="left:806.1px;top:803.1px;width:7.2px;height:7.2px;border-radius:50%;background:#000"></div>
<div class="a" style="left:806.1px;top:832.0px;width:7.2px;height:7.2px;border-radius:50%;background:#000"></div>
<div class="a" style="left:806.1px;top:1044.1px;width:7.2px;height:7.2px;border-radius:50%;background:#000"></div>
<div class="a" style="left:806.1px;top:1073.3px;width:7.2px;height:7.2px;border-radius:50%;background:#000"></div>
<svg class="a" style="left:773px;top:497px;" width="26" height="24" viewBox="0 0 26 24"><defs><linearGradient id="gb" x1="0" y1="1" x2="1" y2="0"><stop offset="0" stop-color="#fb62d6"/><stop offset=".55" stop-color="#fb7fcb"/><stop offset="1" stop-color="#ff9fb4"/></linearGradient></defs>
<path d="M1 15.3 C0.3 12.5 0.6 9.5 2.2 6.8 C4.5 3 8.5 1 13 0.8 C17.5 0.6 21.5 2.6 23.3 6.2 C24.6 9 24.7 14 23.6 18 C23 19.6 22 20.3 20.8 20.4 C20.6 21.8 19.8 22.9 18.4 23 C16.8 22.6 16 21.4 15.6 20.4 L8.5 20.3 C7 19.6 6 18.3 5.4 17 C3.6 17 1.8 16.6 1 15.3z" fill="url(#gb)"/>
<path d="M1.2 14.5 C0.8 11.5 1.5 8.5 3.2 6.2 C2.8 9 2.9 12 3.6 15.2z" fill="#e457b4" opacity=".55"/>
<path d="M5.6 11.2 C8 9.6 11 10.2 12.6 12.4 M6.5 13.6 C8.5 16 11 16.4 13.5 15.4 C15.8 14.4 17.6 13.2 19 11.2 M18.6 6.4 C17.6 8.6 18.6 10.8 21.4 11.6 M14.8 17.6 C16.4 16.2 18.2 15.6 20.4 16 M9 3.6 C11 2.8 13 2.8 15 3.4" fill="none" stroke="#e2459f" stroke-width="1" stroke-linecap="round" opacity=".75"/>
<path d="M16.2 20.4 L20.6 20.4 C20.4 21.8 19.6 22.8 18.4 23 C17.2 22.6 16.5 21.6 16.2 20.4z" fill="#f53cc0"/></svg>
<svg class="a" style="left:773px;top:734px;" width="27" height="26" viewBox="0 0 27 26"><g fill="none"><rect x="-6.4" y="-4.2" width="12.8" height="8.4" rx="4.2" transform="translate(17.1,8.8) rotate(-45)" stroke="#ad9fc2" stroke-width="3.8"/>
<rect x="-6.4" y="-4.2" width="12.8" height="8.4" rx="4.2" transform="translate(17.1,8.8) rotate(-45)" stroke="#cfc6db" stroke-width="2.4"/>
<rect x="-6.4" y="-4.2" width="12.8" height="8.4" rx="4.2" transform="translate(9,16.2) rotate(-45)" stroke="#ad9fc2" stroke-width="3.8"/>
<rect x="-6.4" y="-4.2" width="12.8" height="8.4" rx="4.2" transform="translate(9,16.2) rotate(-45)" stroke="#cbc1d8" stroke-width="2.4"/>
<path d="M10.6 10.2 C13 9.4 15.2 11 15 13.6" stroke="#ad9fc2" stroke-width="3.8"/><path d="M10.6 10.2 C13 9.4 15.2 11 15 13.6" stroke="#cfc6db" stroke-width="2.4"/></g></svg>
<svg class="a" style="left:773px;top:883px;" width="26" height="25" viewBox="0 0 26 25"><defs><linearGradient id="gg" x1="1" y1=".3" x2="0" y2=".8"><stop offset="0" stop-color="#22b4ff"/><stop offset=".5" stop-color="#3a86ea"/><stop offset="1" stop-color="#4a5fc9"/></linearGradient>
<linearGradient id="ga" x1="1" y1="0" x2="0" y2="1"><stop offset="0" stop-color="#74efb0"/><stop offset="1" stop-color="#4fc08c"/></linearGradient><clipPath id="gc"><circle cx="12.6" cy="12.3" r="11.9"/></clipPath></defs>
<circle cx="12.6" cy="12.3" r="11.9" fill="url(#gg)"/>
<g clip-path="url(#gc)"><path d="M14.5 0 C19 -0.5 24 3.5 25.5 9.5 L25 12.2 C23.6 12.6 22.2 12.2 21.8 10.6 C21.2 8.8 19.6 8.2 18.3 9 C17.6 10.4 16.4 10.6 15.6 9.6 L13.6 6.4 L11.2 8.2 L8.8 7.6 L7 8.8 L5.6 7.4 L7.4 5 L9.4 3.6 L9.6 2 L12 1.2z" fill="#79fbb6"/>
<path d="M4 10.4 C6 9 9 8.8 11.5 9 L15 9.6 L16.2 11 C17.8 12 18 13.6 17 15 C16.2 16.6 15.2 17.8 14.4 19.2 C13.6 20.4 12.2 20.9 10.8 20.5 C10.4 18.6 10.2 16.8 9.2 15.4 C7.5 14.8 5.6 14.5 4.4 13 C3.8 12.2 3.7 11.3 4 10.4z" fill="url(#ga)"/>
<circle cx="17.6" cy="17.2" r="0.9" fill="#55c07a"/></g></svg>
<svg class="a" style="left:773px;top:977px;" width="26" height="22" viewBox="0 0 26 22"><defs><linearGradient id="gw" x1="0" y1="0" x2="0" y2="1"><stop offset="0" stop-color="#ffca5c"/><stop offset="1" stop-color="#ffa54c"/></linearGradient></defs>
<path d="M11.2 1.6 a1.9 1.9 0 0 1 3.3 0 L24.9 18.7 a1.6 1.6 0 0 1 -1.4 2.4 H2.3 a1.6 1.6 0 0 1 -1.4 -2.4z" fill="url(#gw)"/>
<path d="M13 0.8 a1.9 1.9 0 0 1 1.6 0.9 L24.9 18.7 a1.6 1.6 0 0 1 -0.6 2.2 L13 1.6z" fill="#ffe04a" opacity=".85"/>
<rect x="11.1" y="6" width="3.4" height="9.6" rx="1.6" fill="#433b5c"/><circle cx="12.8" cy="18" r="1.55" fill="#3c3a63"/></svg>
<svg class="a" style="left:505px;top:505px;" width="920" height="262" viewBox="0 0 920 262"><path d="M5.8 129.0 L459.6 6.8 L461.0 7.5 L461.0 68.0 L910.7 68.0 L910.7 193.8 L461.0 193.8 L461.0 254.1 L459.6 254.8 L5.8 133.2z" fill="#ed1c24"/></svg>
<span class="t" style="left:657.8px;top:616px;font-size:42.5px;font-weight:700;color:#000;-webkit-text-stroke:2px #000;letter-spacing:1.2px;transform:scaleX(1.0922)">Headings Are A Clickable Menu</span>
</body></html>
